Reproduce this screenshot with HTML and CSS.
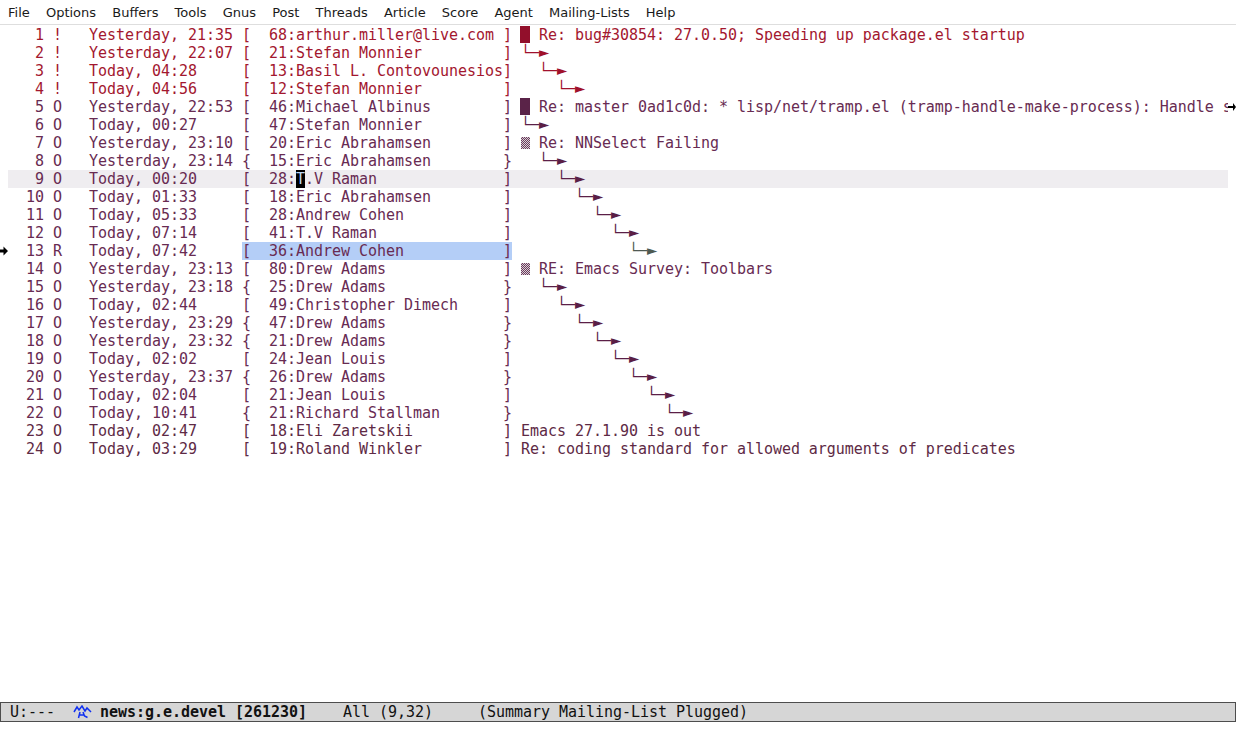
FILE: index.html
```html
<!DOCTYPE html>
<html>
<head>
<meta charset="utf-8">
<link rel="stylesheet" href="styles.css">
</head>
<body>
<div class="frame">
  <nav class="menubar">
    <span class="mi">File</span><span class="mi">Options</span><span class="mi">Buffers</span><span class="mi">Tools</span><span class="mi">Gnus</span><span class="mi">Post</span><span class="mi">Threads</span><span class="mi">Article</span><span class="mi">Score</span><span class="mi">Agent</span><span class="mi">Mailing-Lists</span><span class="mi">Help</span>
  </nav>
  <main class="window">
    <div class="row red"><span class="fringe"></span><span class="txt">   1 !   Yesterday, 21:35 [  68:arthur.miller@live.com ] <span class="blk b-red"></span> Re: bug#30854: 27.0.50; Speeding up package.el startup</span><span class="fringe"></span></div>
    <div class="row red"><span class="fringe"></span><span class="txt">   2 !   Yesterday, 22:07 [  21:Stefan Monnier         ] <span class="tr">└─<span class="tip">►</span></span></span><span class="fringe"></span></div>
    <div class="row red"><span class="fringe"></span><span class="txt">   3 !   Today, 04:28     [  13:Basil L. Contovounesios]   <span class="tr">└─<span class="tip">►</span></span></span><span class="fringe"></span></div>
    <div class="row red"><span class="fringe"></span><span class="txt">   4 !   Today, 04:56     [  12:Stefan Monnier         ]     <span class="tr">└─<span class="tip">►</span></span></span><span class="fringe"></span></div>
    <div class="row pur"><span class="fringe"></span><span class="txt trunc">   5 O   Yesterday, 22:53 [  46:Michael Albinus        ] <span class="blk b-pur"></span> Re: master 0ad1c0d: * lisp/net/tramp.el (tramp-handle-make-process): Handle stderr</span><span class="fringe"><svg class="cont" width="8" height="10" viewBox="0 0 8 10"><path d="M0 4h5v-3l3 4l-3 4v-3h-5z" fill="#000"/></svg></span></div>
    <div class="row pur"><span class="fringe"></span><span class="txt">   6 O   Today, 00:27     [  47:Stefan Monnier         ] <span class="tr">└─<span class="tip">►</span></span></span><span class="fringe"></span></div>
    <div class="row pur"><span class="fringe"></span><span class="txt">   7 O   Yesterday, 23:10 [  20:Eric Abrahamsen        ] <span class="shade"></span> Re: NNSelect Failing</span><span class="fringe"></span></div>
    <div class="row pur"><span class="fringe"></span><span class="txt">   8 O   Yesterday, 23:14 {  15:Eric Abrahamsen        }   <span class="tr">└─<span class="tip">►</span></span></span><span class="fringe"></span></div>
    <div class="row pur hl"><span class="fringe"></span><span class="txt">   9 O   Today, 00:20     [  28:<span class="cur">T</span>.V Raman              ]     <span class="tr">└─<span class="tip">►</span></span></span><span class="fringe"></span></div>
    <div class="row pur"><span class="fringe"></span><span class="txt">  10 O   Today, 01:33     [  18:Eric Abrahamsen        ]       <span class="tr">└─<span class="tip">►</span></span></span><span class="fringe"></span></div>
    <div class="row pur"><span class="fringe"></span><span class="txt">  11 O   Today, 05:33     [  28:Andrew Cohen           ]         <span class="tr">└─<span class="tip">►</span></span></span><span class="fringe"></span></div>
    <div class="row pur"><span class="fringe"></span><span class="txt">  12 O   Today, 07:14     [  41:T.V Raman              ]           <span class="tr">└─<span class="tip">►</span></span></span><span class="fringe"></span></div>
    <div class="row pur"><span class="fringe"><svg class="ovl" width="8" height="10" viewBox="0 0 8 10"><path d="M0 3.5h3.5v-3l4.5 4.5l-4.5 4.5v-3h-3.5z" fill="#000"/></svg></span><span class="txt">  13 R   Today, 07:42     <span class="reg">[  36:Andrew Cohen           ]</span>             <span class="tr tr-read">└─<span class="tip">►</span></span></span><span class="fringe"></span></div>
    <div class="row pur"><span class="fringe"></span><span class="txt">  14 O   Yesterday, 23:13 [  80:Drew Adams             ] <span class="shade"></span> RE: Emacs Survey: Toolbars</span><span class="fringe"></span></div>
    <div class="row pur"><span class="fringe"></span><span class="txt">  15 O   Yesterday, 23:18 {  25:Drew Adams             }   <span class="tr">└─<span class="tip">►</span></span></span><span class="fringe"></span></div>
    <div class="row pur"><span class="fringe"></span><span class="txt">  16 O   Today, 02:44     [  49:Christopher Dimech     ]     <span class="tr">└─<span class="tip">►</span></span></span><span class="fringe"></span></div>
    <div class="row pur"><span class="fringe"></span><span class="txt">  17 O   Yesterday, 23:29 {  47:Drew Adams             }       <span class="tr">└─<span class="tip">►</span></span></span><span class="fringe"></span></div>
    <div class="row pur"><span class="fringe"></span><span class="txt">  18 O   Yesterday, 23:32 {  21:Drew Adams             }         <span class="tr">└─<span class="tip">►</span></span></span><span class="fringe"></span></div>
    <div class="row pur"><span class="fringe"></span><span class="txt">  19 O   Today, 02:02     [  24:Jean Louis             ]           <span class="tr">└─<span class="tip">►</span></span></span><span class="fringe"></span></div>
    <div class="row pur"><span class="fringe"></span><span class="txt">  20 O   Yesterday, 23:37 {  26:Drew Adams             }             <span class="tr">└─<span class="tip">►</span></span></span><span class="fringe"></span></div>
    <div class="row pur"><span class="fringe"></span><span class="txt">  21 O   Today, 02:04     [  21:Jean Louis             ]               <span class="tr">└─<span class="tip">►</span></span></span><span class="fringe"></span></div>
    <div class="row pur"><span class="fringe"></span><span class="txt">  22 O   Today, 10:41     {  21:Richard Stallman       }                 <span class="tr">└─<span class="tip">►</span></span></span><span class="fringe"></span></div>
    <div class="row pur2"><span class="fringe"></span><span class="txt">  23 O   Today, 02:47     [  18:Eli Zaretskii          ] Emacs 27.1.90 is out</span><span class="fringe"></span></div>
    <div class="row pur2"><span class="fringe"></span><span class="txt">  24 O   Today, 03:29     [  19:Roland Winkler         ] Re: coding standard for allowed arguments of predicates</span><span class="fringe"></span></div>
  </main>
  <footer class="modeline"><span class="ml"> U:---  <span class="gicon"><svg width="20" height="15" viewBox="0 0 20 15"><path d="M1 7l3-5l2 3l3-4l3 5l2-3l4 4M7 7l-1.5 6M10 7l1.5 4l3 1.5M6 10h5" stroke="#1030f0" stroke-width="1.5" fill="none"/></svg></span><b>news:g.e.devel [261230]</b>    All (9,32)     (Summary Mailing-List Plugged)</span></footer>
  <div class="echo"></div>
</div>
</body>
</html>
```

FILE: styles.css
```css
html, body {
  margin: 0;
  padding: 0;
  background: #ffffff;
}
.frame {
  width: 1236px;
  height: 740px;
  display: flex;
  flex-direction: column;
  overflow: hidden;
}
.menubar {
  height: 24px;
  border-bottom: 1px solid #dedede;
  margin-bottom: 1px;
  display: flex;
  align-items: center;
  gap: 16.15px;
  padding-left: 8px;
  font-family: "DejaVu Sans", sans-serif;
  font-size: 13px;
  color: #1a1a1a;
  background: #ffffff;
}
.window {
  flex: 1;
  font-family: "DejaVu Sans Mono", monospace;
  font-size: 15px;
  line-height: 18px;
  letter-spacing: -0.0322px;
}
.row {
  display: flex;
  height: 18px;
}
.fringe {
  width: 8px;
  flex: none;
  display: flex;
  align-items: center;
}
.txt {
  width: 1220px;
  flex: none;
  white-space: pre;
}
.trunc {
  overflow-x: clip;
}
.red { color: #a3172f; }
.pur { color: #682b52; }
.pur2 { color: #5e2a45; }
.hl .txt { background: #efedf0; }
.tr { color: #a0112b; }
.pur .tr { color: #5a1f46; }
.tr-read { color: #4e5a52 !important; }
.tip {
  font-size: 17px;
  line-height: 0;
  letter-spacing: 0;
}
.blk {
  display: inline-block;
  width: 10px;
  margin-left: -1px;
  height: 17px;
  vertical-align: top;
}
.b-red { background: #920f2b; }
.b-pur { background: #5a2348; }
.shade {
  display: inline-block;
  width: 9px;
  height: 12px;
  vertical-align: -1px;
  background-color: #ffffff;
  background-image: conic-gradient(#6b3a5c 25%, #d8cfd5 0 50%, #6b3a5c 0 75%, #d8cfd5 0);
  background-size: 2px 2px;
}
.cur {
  background: #000000;
  color: #bcd6f2;
}
.reg { background: #b4cef7; }
.ovl { display: block; }
.cont { display: block; }
.modeline {
  height: 18px;
  border: 1px solid #4d4d4d;
  background: #d6d6d6;
  font-family: "DejaVu Sans Mono", monospace;
  font-size: 15px;
  line-height: 18px;
  letter-spacing: -0.0322px;
  color: #111111;
  white-space: pre;
  overflow: hidden;
}
.modeline b { font-weight: bold; }
.gicon {
  display: inline-block;
  width: 27px;
  height: 18px;
  vertical-align: top;
}
.gicon svg { display: block; margin-top: 2px; }
.echo { height: 18px; }
```
